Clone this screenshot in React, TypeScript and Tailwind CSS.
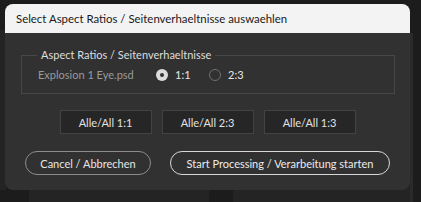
import React from 'react'

const font = { fontFamily: 'Lato, "Noto Sans", sans-serif' }

function AllButton({ label }: { label: string }) {
  return (
    <button className="w-[92px] h-[24px] bg-[#262626] border border-[#434343] text-[#e2e2e2] text-[11px] leading-none">
      {label}
    </button>
  )
}

export default function App() {
  return (
    <div className="relative w-[421px] h-[202px] overflow-hidden bg-[#1c1c1c]" style={font}>
      {/* desktop behind the dialog */}
      <div className="absolute left-0 top-[30px] w-[6px] h-[160px] bg-[#242424]" />
      <div className="absolute left-[29px] top-[185px] w-[180px] h-[20px] bg-[#242424]" />
      <div className="absolute left-[233px] top-[185px] w-[180px] h-[20px] bg-[#242424]" />
      <div className="absolute left-[410px] top-[33px] w-[3px] h-[170px] bg-[#2a2a2a]" />

      <div className="absolute left-[5px] top-[4px] w-[405px] h-[186px] rounded-[8px] overflow-hidden bg-[#313131] flex flex-col">
        <div className="h-[29px] shrink-0 bg-[#f3f3f3] flex items-center pl-[11px] text-[11.4px] text-[#1a1a1a]">
          Select Aspect Ratios / Seitenverhaeltnisse auswaehlen
        </div>

        <div className="flex flex-col pt-[22px]">
          <div className="relative mx-[16px] w-[374px] h-[39px] border border-[#474747] pl-[16px] flex items-center">
            <span className="absolute left-[15px] -top-[8px] px-[4px] bg-[#313131] text-[11px] text-[#dedede] leading-[14px]">
              Aspect Ratios / Seitenverhaeltnisse
            </span>
            <div className="flex items-center mt-[1px]">
              <span className="text-[11px] text-[#9a9a9a] w-[118px]">Explosion 1 Eye.psd</span>
              <span className="w-[12px] h-[12px] rounded-full bg-[#dcdcdc] flex items-center justify-center">
                <span className="w-[4px] h-[4px] rounded-full bg-[#333333]" />
              </span>
              <span className="ml-[7px] w-[34px] text-[11px] text-[#e8e8e8]">1:1</span>
              <span className="w-[12px] h-[12px] rounded-full border border-[#707070]" />
              <span className="ml-[7px] text-[11px] text-[#e8e8e8]">2:3</span>
            </div>
          </div>

          <div className="flex justify-center gap-[10px] mt-[16px]">
            <AllButton label="Alle/All 1:1" />
            <AllButton label="Alle/All 2:3" />
            <AllButton label="Alle/All 1:3" />
          </div>

          <div className="flex justify-center gap-[19px] mt-[17px]">
            <button className="w-[126px] h-[24px] rounded-full border border-[#8c8c8c] text-[#e6e6e6] text-[11px] leading-none">
              Cancel / Abbrechen
            </button>
            <button className="w-[220px] h-[24px] rounded-full border border-[#d8d8d8] text-[#ececec] text-[11px] leading-none">
              Start Processing / Verarbeitung starten
            </button>
          </div>
        </div>
      </div>
    </div>
  )
}
